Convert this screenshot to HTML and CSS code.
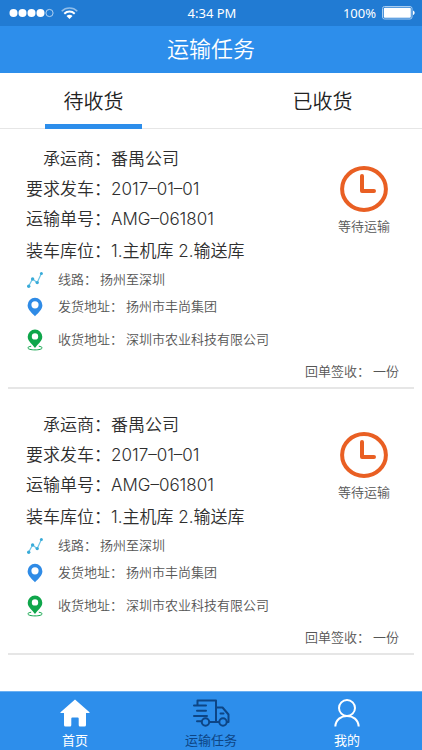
FILE: index.html
```html
<!DOCTYPE html>
<html lang="zh-CN">
<head>
<meta charset="utf-8">
<meta name="viewport" content="width=device-width, initial-scale=1">
<title>运输任务</title>
<link rel="stylesheet" href="styles.css">
</head>
<body>
<svg class="sprite" aria-hidden="true">
  <symbol id="route" viewBox="0 0 16 16">
    <path d="M1.600 14.200 5.600 7l4.600 3.600L14.400 1.600" fill="none" stroke="#6cc4e6" stroke-width="1.200"/>
    <g fill="#39abd8"><circle cx="1.700" cy="14.200" r="1.700"/><circle cx="5.600" cy="7" r="1.700"/><circle cx="10.200" cy="10.600" r="1.700"/><circle cx="14.400" cy="1.600" r="1.500"/></g>
  </symbol>
  <symbol id="pin-from" viewBox="0 0 16 20">
    <path fill="#2f8be6" fill-rule="evenodd" d="M8 .8a7.4 7.4 0 0 0-7.4 7.4c0 4.600 4.700 8 7.400 11 2.700-3 7.400-6.400 7.400-11A7.400 7.400 0 0 0 8 .8zm0 3.400a3.600 3.600 0 1 1 0 7.200 3.600 3.600 0 0 1 0-7.200z"/>
  </symbol>
  <symbol id="pin-to" viewBox="0 0 16 22">
    <path fill="#0fa64b" fill-rule="evenodd" d="M8 .5A7.300 7.300 0 0 0 .7 7.800C.7 12.300 5.600 15.500 8 19c2.400-3.500 7.300-6.700 7.300-11.200A7.300 7.300 0 0 0 8 .5zm0 3.700a3.200 3.200 0 1 1 0 6.400 3.200 3.200 0 0 1 0-6.400z"/>
    <path d="M4.200 17.200c-2 .3-3.300.9-3.300 1.700 0 1.200 3.200 2 7.100 2s7.100-.8 7.100-2c0-.8-1.300-1.400-3.300-1.700" fill="none" stroke="#0fa64b" stroke-width="1"/>
  </symbol>
  <symbol id="clock" viewBox="0 0 48 46">
    <ellipse cx="24" cy="23" rx="21.900" ry="20.900" fill="none" stroke="#e95f23" stroke-width="4"/>
    <path d="M22 10v15h12" fill="none" stroke="#e95f23" stroke-width="4" stroke-linecap="round" stroke-linejoin="round"/>
  </symbol>
</svg>

<header class="top">
  <div class="status">
    <div class="signal">
      <svg width="46" height="10" viewBox="0 0 46 10" fill="#fff" aria-hidden="true"><circle cx="4.500" cy="5" r="4"/><circle cx="13.500" cy="5" r="4"/><circle cx="22.500" cy="5" r="4"/><circle cx="31.500" cy="5" r="4"/><circle cx="40.500" cy="5" r="3.600" fill="none" stroke="#d5e6f8" stroke-width=".8"/></svg>
      <svg width="17" height="12" viewBox="0 0 17 12" fill="none" stroke="#fff" stroke-width="2" aria-hidden="true"><path d="M.7 4.200a11.200 11.200 0 0 1 15.600 0" stroke="#8fbdea" stroke-width="1.600"/><path d="M3.300 6.700a7.500 7.500 0 0 1 10.400 0"/><path d="M8.500 12 5.500 9.100a4.200 4.200 0 0 1 6 0z" fill="#fff" stroke="none"/></svg>
    </div>
    <span class="time">4:34 PM</span>
    <div class="power">
      <span>100%</span>
      <svg width="33" height="14" viewBox="0 0 33 14" aria-hidden="true"><rect x=".5" y=".5" width="29.500" height="12.500" rx="2" fill="none" stroke="#a9cdf0"/><rect x="1.800" y="1.800" width="27" height="10" rx="1" fill="#fff"/><path d="M31 4.500c2.200.8 2.200 3.800 0 4.600z" fill="#fff"/></svg>
    </div>
  </div>
  <h1>运输任务</h1>
</header>

<div class="tabs" role="tablist">
  <button class="tab active" type="button" role="tab" aria-selected="true">待收货</button>
  <button class="tab" type="button" role="tab" aria-selected="false">已收货</button>
</div>

<main>
  <article class="card">
    <div class="summary">
      <dl class="facts">
        <div><dt>承运商：</dt><dd>番禺公司</dd></div>
        <div><dt>要求发车：</dt><dd>2017–01–01</dd></div>
        <div><dt>运输单号：</dt><dd>AMG–061801</dd></div>
        <div class="depot"><dt>装车库位：</dt><dd>1.主机库 2.输送库</dd></div>
      </dl>
      <div class="state"><svg aria-hidden="true"><use href="#clock"/></svg><span>等待运输</span></div>
    </div>
    <dl class="places">
      <div><svg class="route" aria-hidden="true"><use href="#route"/></svg><dt>线路：</dt><dd>扬州至深圳</dd></div>
      <div><svg class="from" aria-hidden="true"><use href="#pin-from"/></svg><dt>发货地址：</dt><dd>扬州市丰尚集团</dd></div>
      <div class="dest"><svg class="to" aria-hidden="true"><use href="#pin-to"/></svg><dt>收货地址：</dt><dd>深圳市农业科技有限公司</dd></div>
    </dl>
    <p class="receipt"><span>回单签收：</span><span>一份</span></p>
  </article>

  <article class="card">
    <div class="summary">
      <dl class="facts">
        <div><dt>承运商：</dt><dd>番禺公司</dd></div>
        <div><dt>要求发车：</dt><dd>2017–01–01</dd></div>
        <div><dt>运输单号：</dt><dd>AMG–061801</dd></div>
        <div class="depot"><dt>装车库位：</dt><dd>1.主机库 2.输送库</dd></div>
      </dl>
      <div class="state"><svg aria-hidden="true"><use href="#clock"/></svg><span>等待运输</span></div>
    </div>
    <dl class="places">
      <div><svg class="route" aria-hidden="true"><use href="#route"/></svg><dt>线路：</dt><dd>扬州至深圳</dd></div>
      <div><svg class="from" aria-hidden="true"><use href="#pin-from"/></svg><dt>发货地址：</dt><dd>扬州市丰尚集团</dd></div>
      <div class="dest"><svg class="to" aria-hidden="true"><use href="#pin-to"/></svg><dt>收货地址：</dt><dd>深圳市农业科技有限公司</dd></div>
    </dl>
    <p class="receipt"><span>回单签收：</span><span>一份</span></p>
  </article>
</main>

<nav class="bottom">
  <a href="#home">
    <svg width="30" height="28" viewBox="0 0 30 28" fill="#fff" aria-hidden="true"><path d="M15 .5 29.500 13.200c.3.500 0 .8-.5.800h-3v12q0 1.500-1.500 1.500H20q-1.300 0-1.300-1.500v-6.500q0-1-1-1h-5.400q-1 0-1 1V26q0 1.500-1.300 1.500H5.500Q4 27.500 4 26V14H1c-.5 0-.8-.3-.5-.8z"/></svg>
    <span>首页</span>
  </a>
  <a class="current" href="#tasks" aria-current="page">
    <svg width="38" height="28" viewBox="0 0 38 28" fill="none" stroke="#0d4585" stroke-width="2" stroke-linecap="round" stroke-linejoin="round" aria-hidden="true"><path d="M5.500 5.500V1.500h18.500v21.500h-6M2 6.500h12M5 11.700h9M2 16.900h13M5 22.300h4M24 8.500h6.500l6 7v7.500h-1.500M24 23h2.500M28.500 14.500h3"/><circle cx="13.500" cy="23" r="3.700"/><circle cx="31" cy="23" r="3.700"/></svg>
    <span>运输任务</span>
  </a>
  <a href="#me">
    <svg width="28" height="28" viewBox="0 0 28 28" fill="none" stroke="#fff" stroke-width="2" aria-hidden="true"><circle cx="14" cy="9" r="8"/><path d="M2.300 27.500C2.800 20.500 8 17 14 17s11.200 3.500 11.700 10.500"/></svg>
    <span>我的</span>
  </a>
</nav>
</body>
</html>
```
FILE: styles.css
```css
* {
  box-sizing: border-box;
}

body {
  margin: 0;
  min-height: 100vh;
  display: flex;
  flex-direction: column;
  background: #fff;
  color: #2e2e2e;
  font-family: Inter, "Noto Sans CJK SC", sans-serif;
  font-size: 13px;
}

h1, dl, dd, p {
  margin: 0;
}

.sprite {
  position: absolute;
  width: 0;
  height: 0;
}

.top {
  background: #2d8eeb;
  color: #fff;
}

.status {
  display: grid;
  grid-template-columns: 1fr auto 1fr;
  align-items: center;
  height: 26px;
  padding: 0 7px 0 9px;
  background: #217bd3;
  font-family: "Noto Sans", sans-serif;
  font-size: 13px;
}

.signal, .power {
  display: flex;
  align-items: center;
  gap: 6px;
}

.power {
  justify-content: flex-end;
}

h1 {
  font-size: 22px;
  font-weight: 350;
  line-height: 47px;
  text-align: center;
}

.tabs {
  display: flex;
  justify-content: space-between;
  padding: 0 51px 0 45px;
  border-bottom: 1px solid #e6e6e6;
}

.tab {
  width: 97px;
  height: 56px;
  margin-bottom: -1px;
  padding: 4px 0 0;
  border: 0;
  border-bottom: 5px solid transparent;
  background: none;
  color: #222;
  font: inherit;
  font-size: 20px;
  font-weight: 350;
}

.tab.active {
  border-bottom-color: #2d8eeb;
}

main {
  flex: 1;
}

.card {
  margin: 0 8px 6px;
  padding: 15px 12px 2px 18px;
  border-bottom: 2px solid #e6e6e6;
}

.summary {
  display: flex;
  justify-content: space-between;
}

.facts {
  font-size: 17px;
  font-weight: 350;
  line-height: 30px;
}

.facts > div, .places > div {
  display: flex;
}

.facts dt {
  width: 85px;
  text-align: right;
}

.facts .depot {
  margin-top: 2px;
}

.state {
  display: flex;
  flex-direction: column;
  align-items: center;
  width: 68px;
  padding-top: 22px;
  margin-right: 4px;
  color: #555;
  font-weight: 350;
  line-height: 26px;
}

.state svg {
  width: 48px;
  height: 46px;
  margin-bottom: 1px;
}

.places {
  color: #555;
  font-weight: 350;
  line-height: 27px;
}

.places > div {
  align-items: center;
}

.places dt {
  margin: 0 3px 0 14px;
}

.places .dest {
  margin-top: 6px;
}

.places svg {
  flex: none;
  width: 18px;
  height: 16px;
}

.places .from {
  height: 20px;
}

.places .to {
  height: 22px;
}

.receipt {
  display: flex;
  justify-content: flex-end;
  gap: 3px;
  margin-top: 5px;
  padding-right: 3px;
  color: #555;
  font-weight: 350;
  line-height: 27px;
}

.bottom {
  position: sticky;
  bottom: 0;
  display: grid;
  grid-template-columns: repeat(3, 1fr);
  height: 59px;
  padding: 7px 7px 0;
  border-top: 1px solid #6bb0f2;
  background: #2d8eeb;
}

.bottom a {
  display: flex;
  flex-direction: column;
  align-items: center;
  gap: 3px;
  color: #fff;
  line-height: 20px;
  text-decoration: none;
}

.bottom .current {
  color: #0d4585;
}
```
